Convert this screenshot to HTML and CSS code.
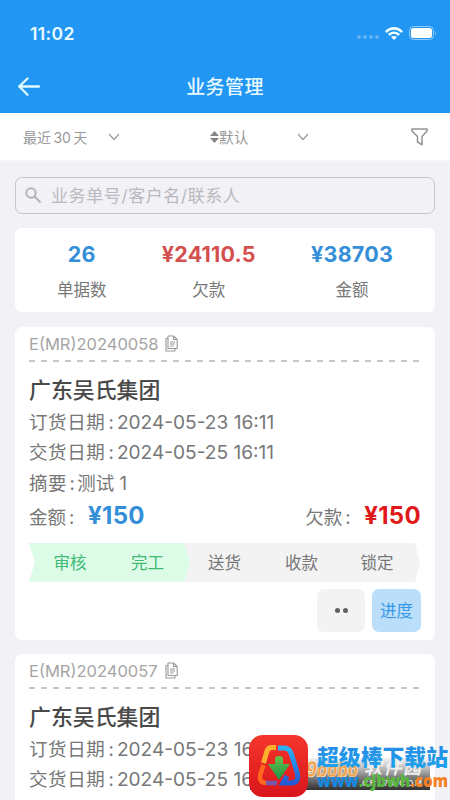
FILE: index.html
```
<!DOCTYPE html>
<html lang="zh-CN">
<head>
<meta charset="utf-8">
<title>业务管理</title>
<link rel="stylesheet" href="styles.css">
</head>
<body>
<div class="screen">
  <header class="top">
    <div class="status">
      <span class="time">11:02</span>
      <div class="signals">
        <span class="dots"><i></i><i></i><i></i><i></i></span>
        <svg class="wifi" width="18" height="13" viewBox="0 0 18 13"><path d="M0 4.2C5-1.3 13-1.3 18 4.2L16.2 6C12.2 1.8 5.8 1.8 1.8 6Z"/><path d="M3 7.1C6.4 3.6 11.6 3.6 15 7.1L13.2 8.9C10.8 6.5 7.2 6.5 4.8 8.9Z"/><path d="M6 10.1C7.7 8.5 10.3 8.5 12 10.1L9 13Z"/></svg>
        <svg class="battery" width="28" height="14" viewBox="0 0 28 14"><rect x=".5" y=".5" width="24" height="13" rx="4" fill="none" stroke="#8fcafa"/><rect x="2" y="2" width="21" height="10" rx="2.5" fill="#fff"/><path d="M26 5q2 2 0 4Z" fill="#8fcafa"/></svg>
      </div>
    </div>
    <div class="nav">
      <svg class="back" width="24" height="20" viewBox="0 0 24 20"><path d="M21 9.500H1.200M9.500 1.500L1.200 9.500L9.500 17.800"/></svg>
      <h1>业务管理</h1>
    </div>
  </header>
  <div class="filters">
    <span class="range">最近 30 天</span>
    <svg class="chev" width="12" height="8" viewBox="0 0 12 8"><path d="M1 1L6 6.500L11 1"/></svg>
    <svg class="sort" width="9" height="12" viewBox="0 0 9 12"><path d="M4.500 0L9 5H0ZM4.500 12L0 7H9Z"/></svg>
    <span class="preset">默认</span>
    <svg class="chev" width="12" height="8" viewBox="0 0 12 8"><path d="M1 1L6 6.500L11 1"/></svg>
    <svg class="funnel" width="17" height="18" viewBox="0 0 17 18"><path d="M1 1H16V3L11 8.500V16.800L6.500 14V8.500L1 3Z"/></svg>
  </div>
  <main>
    <div class="search">
      <svg width="17" height="17" viewBox="0 0 17 17"><circle cx="6" cy="6" r="4.700"/><path d="M9.500 9.500L15.500 15.500"/></svg>
      <span>业务单号/客户名/联系人</span>
    </div>
    <section class="stats">
      <div><b>26</b><span>单据数</span></div>
      <div class="debt"><b>¥24110.5</b><span>欠款</span></div>
      <div><b>¥38703</b><span>金额</span></div>
    </section>
    <article class="order">
      <div class="number"><span>E(MR)20240058</span><svg width="13" height="17" viewBox="0 0 13 17"><path d="M3 1H8.500L12.200 4.500V13.500H3Z"/><path d="M8.500 1V4.500H12M3 3.500H1V16H10V13.500M5 7H10M5 9H10M5 11H8.500"/></svg></div>
      <svg class="rule" width="391" height="2" viewBox="0 0 391 2"><path d="M0 1H391"/></svg>
      <h2>广东吴氏集团</h2>
      <p><span class="label">订货日期</span><span class="colon">:</span><span class="value">2024-05-23 16:11</span></p>
      <p><span class="label">交货日期</span><span class="colon">:</span><span class="value">2024-05-25 16:11</span></p>
      <p class="note"><span class="label">摘要</span><span class="colon">:</span><span>测试 1</span></p>
      <div class="amounts"><span class="caption">金额<i>:</i></span><b>¥150</b><span class="caption owed">欠款<i>:</i></span><b class="red">¥150</b></div>
      <div class="steps"><span class="done first">审核</span><span class="done last">完工</span><span>送货</span><span>收款</span><span class="end">锁定</span></div>
      <div class="actions"><span class="more"><i></i><i></i></span><span class="progress">进度</span></div>
    </article>
    <article class="order">
      <div class="number"><span>E(MR)20240057</span><svg width="13" height="17" viewBox="0 0 13 17"><path d="M3 1H8.500L12.200 4.500V13.500H3Z"/><path d="M8.500 1V4.500H12M3 3.500H1V16H10V13.500M5 7H10M5 9H10M5 11H8.500"/></svg></div>
      <svg class="rule" width="391" height="2" viewBox="0 0 391 2"><path d="M0 1H391"/></svg>
      <h2>广东吴氏集团</h2>
      <p><span class="label">订货日期</span><span class="colon">:</span><span class="value">2024-05-23 16:11</span></p>
      <p><span class="label">交货日期</span><span class="colon">:</span><span class="value">2024-05-25 16:11</span></p>
    </article>
  </main>
  <svg class="brand" width="210" height="90" viewBox="0 0 210 90">
    <defs>
      <linearGradient id="band" x2="0" y2="1"><stop offset="0" stop-color="#aaa" stop-opacity=".15"/><stop offset=".55" stop-color="#888"/><stop offset="1" stop-color="#303030"/></linearGradient>
      <linearGradient id="tile" x2="0" y2="1"><stop offset="0" stop-color="#f5362c"/><stop offset="1" stop-color="#d9151b"/></linearGradient>
      <linearGradient id="leaf" x2="0" y2="1"><stop offset="0" stop-color="#6cc24a"/><stop offset="1" stop-color="#159447"/></linearGradient>
      <linearGradient id="sky" x2="0" y2="1"><stop offset="0" stop-color="#27b3f5"/><stop offset="1" stop-color="#2459d5"/></linearGradient>
      <linearGradient id="ink" x2="0" y2="1"><stop offset="0" stop-color="#2a86e2"/><stop offset="1" stop-color="#1ba3ee"/></linearGradient>
    </defs>
    <rect x="10" y="48" width="180" height="32" fill="url(#band)"/>
    <text class="under-latin" x="66" y="67" textLength="52" lengthAdjust="spacingAndGlyphs">9bobo</text>
    <text class="under-cjk" x="124" y="64" textLength="57">软件园</text>
    <text class="under-small" x="122" y="76" textLength="60">CR173.COM</text>
    <rect x="9" y="25" width="59" height="62" rx="14" fill="url(#tile)"/>
    <path d="M36 37.500H32Q28 37.500 27 41L23.500 53" fill="none" stroke="#ffb12e" stroke-width="5"/>
    <path d="M23.500 55L20.500 64Q18 73 27 73" fill="none" stroke="#ff691b" stroke-width="4.500"/>
    <path d="M26 73H37" stroke="#7458ac" stroke-width="4.500"/>
    <path d="M38 38H44Q49 38 51 43L57 62Q60 73 51 73H43L47 66" fill="none" stroke="url(#sky)" stroke-width="5"/>
    <path d="M35 49Q35 46 39 46Q43 46 43 49V54H50L39 70L28 54H35Z" fill="url(#leaf)"/>
    <text class="site" x="77" y="54.500" textLength="131" lengthAdjust="spacingAndGlyphs" fill="url(#ink)">超级棒下载站</text>
    <text class="url" x="77" y="77" textLength="131" lengthAdjust="spacingAndGlyphs"><tspan fill="#1687df">www</tspan><tspan fill="#58b83e">.cjbwh</tspan><tspan fill="#f78225">.com</tspan></text>
  </svg>
</div>
</body>
</html>
```

FILE: styles.css
```
* { box-sizing: border-box; }
body { margin: 0; background: #f1f1f6; font-family: Inter, "Noto Sans CJK SC", sans-serif; color: #777; }
h1, h2, p { margin: 0; }
i { font-style: normal; }
svg { display: block; flex: none; }
.screen { position: relative; width: 450px; height: 800px; overflow: hidden; }
.top { height: 113px; background: #2196f3; color: #e8faff; }
.status { height: 60px; padding: 6px 13px 0 30px; display: flex; align-items: center; justify-content: space-between; }
.time { font-size: 17.5px; font-weight: 600; letter-spacing: 0.4px; }
.signals { display: flex; align-items: center; gap: 6px; }
.wifi { fill: #effcff; }
.dots { display: flex; gap: 2px; padding-top: 8px; }
.dots i { width: 4px; height: 4px; border-radius: 50%; background: #62b4f7; }
.nav { height: 53px; padding: 0 18px; display: grid; grid-template-columns: 24px 1fr 24px; align-items: center; }
.back path { fill: none; stroke: #dffaff; stroke-width: 2.3; stroke-linecap: round; stroke-linejoin: round; }
h1 { padding-top: 2px; font-size: 19px; font-weight: 500; line-height: 26px; text-align: center; letter-spacing: 0.4px; }
.filters { height: 48px; padding: 0 22px 0 23px; display: flex; align-items: center; background: #fff; font-size: 14px; color: #999; border-bottom: 1px solid #f7f7fa; }
.range { width: 85px; white-space: nowrap; word-spacing: -1.5px; }
.chev path { fill: none; stroke: #999; stroke-width: 1.2; }
.sort { margin-left: 90px; fill: #858585; }
.preset { width: 78px; font-size: 14.7px; }
.funnel { margin-left: auto; }
.funnel path { fill: none; stroke: #929292; stroke-width: 1.5; stroke-linejoin: round; }
main { padding: 16px 15px; display: flex; flex-direction: column; }
.search { height: 37px; padding-left: 9px; display: flex; align-items: center; gap: 9px; border: 1.5px solid #c5c5ce; border-radius: 7px; font-size: 17px; color: #b9b9bf; letter-spacing: 0.6px; }
.search span { margin-top: -2px; }
.search svg { fill: none; stroke: #b4b4ba; stroke-width: 2; }
.stats { height: 84px; margin-top: 14px; padding: 10px 42px 0; display: flex; justify-content: space-between; background: #fff; border-radius: 7px; }
.stats div { display: flex; flex-direction: column; align-items: center; }
.stats b { font-size: 21.5px; line-height: 32px; font-weight: 650; letter-spacing: 0.2px; color: #348fd8; }
.stats .debt b { color: #d4504e; }
.stats span { margin-top: 8px; font-size: 16.5px; line-height: 24px; }
.order { height: 313px; flex: none; margin-top: 15px; padding: 0 14px; background: #fff; border-radius: 7px; }
.order + .order { margin-top: 14px; }
.number { height: 33px; display: flex; align-items: center; gap: 7px; font-size: 16.5px; color: #a5a5a5; }
.number svg path { fill: none; stroke: #999; stroke-width: 1.1; stroke-linejoin: round; }
.rule path { stroke: #b5b5b5; stroke-width: 1.5; stroke-dasharray: 6 6; }
h2 { padding-top: 12px; font-size: 21.9px; line-height: 32px; font-weight: 500; color: #494949; height: 45px; }
.order p { height: 30.300px; display: flex; align-items: center; font-size: 18.5px; line-height: 30px; white-space: nowrap; }
.label { letter-spacing: 0.6px; }
.colon { width: 11.5px; text-align: center; }
.note .colon { width: 10px; }
.value { font-size: 19.1px; }
.amounts { display: flex; align-items: center; height: 38px; padding-bottom: 1px; font-size: 18.5px; }
.caption { width: 59px; }
.caption i { margin-left: 3px; }
.amounts b { font-size: 24px; font-weight: 650; letter-spacing: 0.3px; margin-top: -1px; color: #348fd8; }
.amounts .red { color: #df1919; }
.owed { margin-left: auto; }
.steps { display: grid; grid-template-columns: 80px 77px 77px 77px 80px; height: 39px; margin-top: 7px; background: #f3f3f3; clip-path: polygon(0 0, 386px 0, 391px 50%, 386px 100%, 0 100%, 6px 50%); }
.steps span { display: flex; align-items: center; justify-content: center; font-size: 16.5px; }
.steps .done { background: #dcfce7; color: #40b975; }
.steps .first { padding-left: 2px; }
.steps .last { width: 81px; padding-right: 4px; clip-path: polygon(0 0, 75px 0, 81px 50%, 75px 100%, 0 100%); }
.steps .end { padding-right: 6px; }
.actions { margin-top: 7px; display: flex; justify-content: flex-end; gap: 7px; }
.actions span { width: 48px; height: 43px; display: flex; align-items: center; justify-content: center; border-radius: 7px; background: #f3f3f3; }
.actions .more { gap: 3px; }
.more i { width: 5px; height: 5px; border-radius: 50%; background: #606060; }
.actions .progress { width: 49px; background: #bbdefb; color: #3698e7; font-size: 16.5px; }
.brand { position: absolute; left: 240px; top: 710px; }
.under-latin { font: italic 800 22px Inter, sans-serif; fill: #f0a04a; stroke: #fff3de; stroke-width: 0.6px; }
.under-cjk { font: italic 700 18px "Noto Sans CJK SC", sans-serif; fill: #eee; }
.under-small { font: 700 9px "Liberation Sans", sans-serif; fill: #ddd; }
.site { font: 900 22px "Noto Sans CJK SC", sans-serif; }
.url { font: 800 17px "Open Sans", sans-serif; }
```
